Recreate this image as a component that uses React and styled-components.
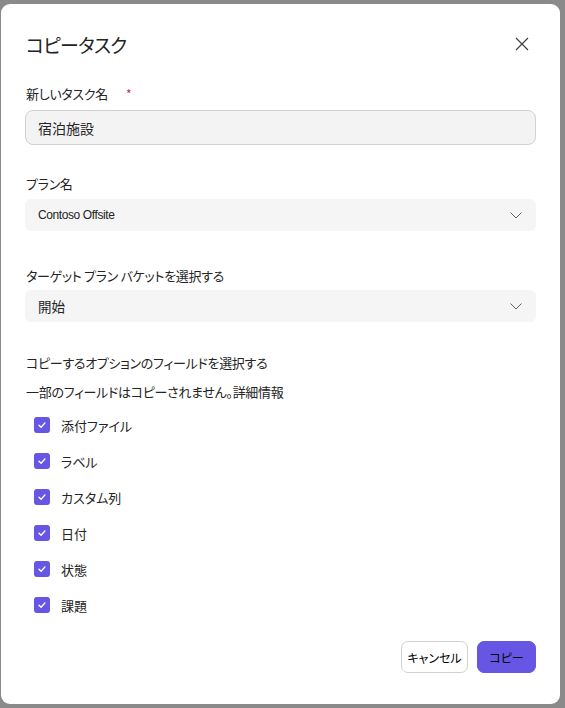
import styled, { createGlobalStyle } from "styled-components"

const GlobalStyle = createGlobalStyle`
  html, body { margin: 0; padding: 0; }
  body {
    background: #8a8a8a;
    font-family: "Noto Sans CJK JP", "Noto Sans", sans-serif;
    font-feature-settings: "palt";
    color: #242424;
  }
`

const Backdrop = styled.div`
  width: 565px;
  height: 708px;
  padding: 4px 5px 4px 1px;
  box-sizing: border-box;
  display: flex;
`

const Dialog = styled.div`
  flex: 1;
  background: #fff;
  border-radius: 9px;
  padding: 26px 24px 0 24px;
  display: flex;
  flex-direction: column;
`

const Header = styled.div`
  display: flex;
  align-items: center;
  justify-content: space-between;
  height: 28px;
`

const Title = styled.h2`
  margin: 0 0 0 1px;
  font-size: 19px;
  font-weight: 400;
  letter-spacing: -0.8px;
`

const CloseButton = styled.button`
  border: none;
  background: none;
  padding: 0;
  width: 20px;
  height: 20px;
  display: flex;
  align-items: center;
  justify-content: center;
  margin-right: 4px;
  cursor: pointer;
`

const Label = styled.div`
  font-size: 13px;
  line-height: 18px;
  margin-top: ${p => p.$top}px;
  margin-bottom: ${p => p.$bottom ?? 6}px;
  margin-left: 1px;
  display: flex;
  letter-spacing: -0.3px;
`

const Required = styled.span`
  color: #c4314b;
  margin-left: 18px;
  font-size: 12px;
`

const TextInput = styled.div`
  height: 35px;
  box-sizing: border-box;
  background: #f3f3f3;
  border: 1px solid #d1d1d1;
  border-radius: 8px;
  padding: 0 12px;
  display: flex;
  align-items: center;
  font-size: 14px;
`

const Select = styled.div`
  height: 32px;
  background: #f5f5f5;
  border-radius: 6px;
  padding: 0 13px;
  display: flex;
  align-items: center;
  justify-content: space-between;
  font-size: ${p => (p.$latin ? 12 : 13.5)}px;
  font-family: ${p => (p.$latin ? `"Liberation Sans", sans-serif` : "inherit")};
  letter-spacing: ${p => (p.$latin ? "-0.4px" : "0")};
`

const CheckList = styled.div`
  display: flex;
  flex-direction: column;
  gap: 20px;
  margin-top: 16px;
  padding-left: 9px;
`

const CheckRow = styled.label`
  display: flex;
  align-items: center;
  gap: 11px;
  height: 16px;
  font-size: 13px;
`

const Box = styled.span`
  width: 16px;
  height: 16px;
  border-radius: 3px;
  background: #6656e3;
  display: flex;
  align-items: center;
  justify-content: center;
`

const Footer = styled.div`
  display: flex;
  justify-content: flex-end;
  gap: 9px;
  margin-top: auto;
  margin-bottom: 31px;
`

const Button = styled.button`
  height: 32px;
  width: ${p => (p.$primary ? 59 : 67)}px;
  box-sizing: border-box;
  border-radius: 7px;
  font-family: inherit;
  font-feature-settings: "palt";
  font-size: 12px;
  padding: 0;
  background: ${p => (p.$primary ? "#6656e3" : "#fff")};
  border: 1px solid ${p => (p.$primary ? "#6656e3" : "#d1d1d1")};
  color: #000;
`

const Chevron = () => (
  <svg width="14" height="14" viewBox="0 0 14 14">
    <path d="M1.5 4.5 L7 10 L12.5 4.5" fill="none" stroke="#616161" strokeWidth="1" />
  </svg>
)

const Check = () => (
  <svg width="10" height="10" viewBox="0 0 10 10">
    <path d="M2 5.2 L4.1 7.2 L8 2.9" fill="none" stroke="#fff" strokeWidth="1.4" strokeLinecap="round" strokeLinejoin="round" />
  </svg>
)

const fields = ["添付ファイル", "ラベル", "カスタム列", "日付", "状態", "課題"]

export default function App() {
  return (
    <>
      <GlobalStyle />
      <Backdrop>
        <Dialog>
          <Header>
            <Title>コピータスク</Title>
            <CloseButton aria-label="閉じる">
              <svg width="14" height="14" viewBox="0 0 14 14">
                <path d="M1 1 L13 13 M13 1 L1 13" stroke="#424242" strokeWidth="1.2" />
              </svg>
            </CloseButton>
          </Header>

          <Label $top={27} $bottom={7}>
            新しいタスク名<Required>*</Required>
          </Label>
          <TextInput>宿泊施設</TextInput>

          <Label $top={30} $bottom={6}>プラン名</Label>
          <Select $latin>
            Contoso Offsite
            <Chevron />
          </Select>

          <Label $top={36} $bottom={5}>ターゲット プラン バケットを選択する</Label>
          <Select>
            開始
            <Chevron />
          </Select>

          <Label $top={32} $bottom={11}>コピーするオプションのフィールドを選択する</Label>
          <Label $top={0} $bottom={0}>一部のフィールドはコピーされません。詳細情報</Label>

          <CheckList>
            {fields.map(f => (
              <CheckRow key={f}>
                <Box>
                  <Check />
                </Box>
                {f}
              </CheckRow>
            ))}
          </CheckList>

          <Footer>
            <Button>キャンセル</Button>
            <Button $primary>コピー</Button>
          </Footer>
        </Dialog>
      </Backdrop>
    </>
  )
}
